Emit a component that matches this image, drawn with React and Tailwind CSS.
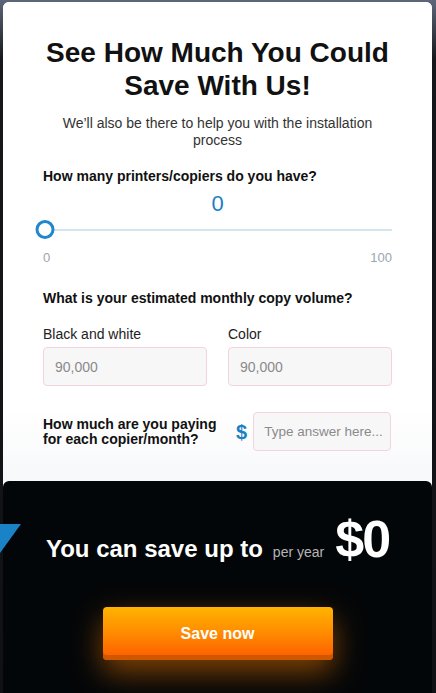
import React, { useState } from "react";

const font = { fontFamily: '"Liberation Sans", Arial, sans-serif' };

function Field({ placeholder, className = "" }) {
  return (
    <input
      type="text"
      placeholder={placeholder}
      className={`h-[39px] rounded-[4px] border border-[#f3d3e0] bg-[#f8f7f8] text-[#333] placeholder:text-[#8a8a8a] outline-none ${className}`}
    />
  );
}

export default function App() {
  const [printers, setPrinters] = useState(0);

  return (
    <div
      className="relative h-[693px] overflow-hidden bg-[linear-gradient(180deg,#5e677a_0px,#3a3f4a_30px,#15171b_60px,#101114_100%)] pt-[2px]"
      style={font}
    >
      <div className="mx-[3px] w-[429px] overflow-hidden rounded-[6px] bg-white">
        {/* form */}
        <div className="bg-[linear-gradient(180deg,#ffffff_85%,#f7f8fa_100%)] px-[40px] pb-[30px] pt-[34px]">
          <h1 className="text-center text-[28px] font-bold leading-[33px] text-[#111]">
            See How Much You Could Save With Us!
          </h1>
          <p className="mx-auto mt-[13px] text-center text-[14px] leading-[17px] text-[#333]">
            We’ll also be there to help you with the installation process
          </p>

          <p className="mt-[19px] text-[14px] font-bold leading-[16px] text-[#111]">
            How many printers/copiers do you have?
          </p>
          <div className="mt-[7px] text-center text-[22px] leading-[26px] text-[#1b7fc4]">{printers}</div>

          <div className="relative mt-[3px] h-[20px]">
            <div className="absolute left-[2px] right-0 top-[9px] h-[2px] bg-[#d5e5ee]" />
            <div
              className="absolute top-[0px] h-[19px] w-[19px] -translate-x-1/2 rounded-full border-[3px] border-[#2186cc] bg-white"
              style={{ left: `${2 + printers * 3.47}px` }}
            />
            <input
              type="range"
              min="0"
              max="100"
              value={printers}
              onChange={(e) => setPrinters(Number(e.target.value))}
              className="absolute inset-0 w-full opacity-0"
            />
          </div>
          <div className="mt-[10px] flex justify-between text-[13px] leading-[16px] text-[#9aa6ae]">
            <span>0</span>
            <span>100</span>
          </div>

          <p className="mt-[24px] text-[14px] font-bold leading-[16px] text-[#111]">
            What is your estimated monthly copy volume?
          </p>
          <div className="mt-[20px] grid grid-cols-2 gap-[21px]">
            <label className="flex flex-col gap-[5px] text-[14px] leading-[16px] text-[#222]">
              Black and white
              <Field placeholder="90,000" className="w-full px-[11px] text-[14px]" />
            </label>
            <label className="flex flex-col gap-[5px] text-[14px] leading-[16px] text-[#222]">
              Color
              <Field placeholder="90,000" className="w-full px-[11px] text-[14px]" />
            </label>
          </div>

          <div className="mt-[26px] flex items-center">
            <p className="w-[180px] shrink-0 text-[14px] font-bold leading-[15px] text-[#111]">
              How much are you paying for each copier/month?
            </p>
            <span className="ml-[13px] text-[20px] font-bold leading-[20px] text-[#1b7fc4]">$</span>
            <Field
              placeholder="Type answer here..."
              className="ml-[6px] w-[138px] min-w-0 pl-[10px] pr-[2px] text-[13.5px]"
            />
          </div>
        </div>

        {/* result */}
        <div className="relative h-[220px] rounded-t-[6px] bg-[#030608] pt-[32px]">
          <div className="flex items-baseline justify-center">
            <span className="text-[24px] font-bold text-white">You can save up to</span>
            <span className="ml-[10px] text-[14px] text-[#b5b5b5]">per year</span>
            <span className="ml-[11px] text-[52px] font-bold leading-[52px] tracking-[-2px] text-white">$0</span>
          </div>
          <div className="mt-[40px] flex justify-center">
            <button className="h-[53px] w-[230px] rounded-[4px] bg-[linear-gradient(180deg,#ffb400_0%,#ff8a00_50%,#ff6400_90%)] text-[16px] font-bold text-white shadow-[inset_0_-5px_0_#cf5700,0_12px_30px_rgba(255,130,0,0.5)]">
              Save now
            </button>
          </div>
        </div>
      </div>

      <svg className="absolute left-0 top-[524px]" width="21" height="29" viewBox="0 0 21 29">
        <polygon points="0,0 21,0 0,29" fill="#1a82c6" />
      </svg>
    </div>
  );
}
